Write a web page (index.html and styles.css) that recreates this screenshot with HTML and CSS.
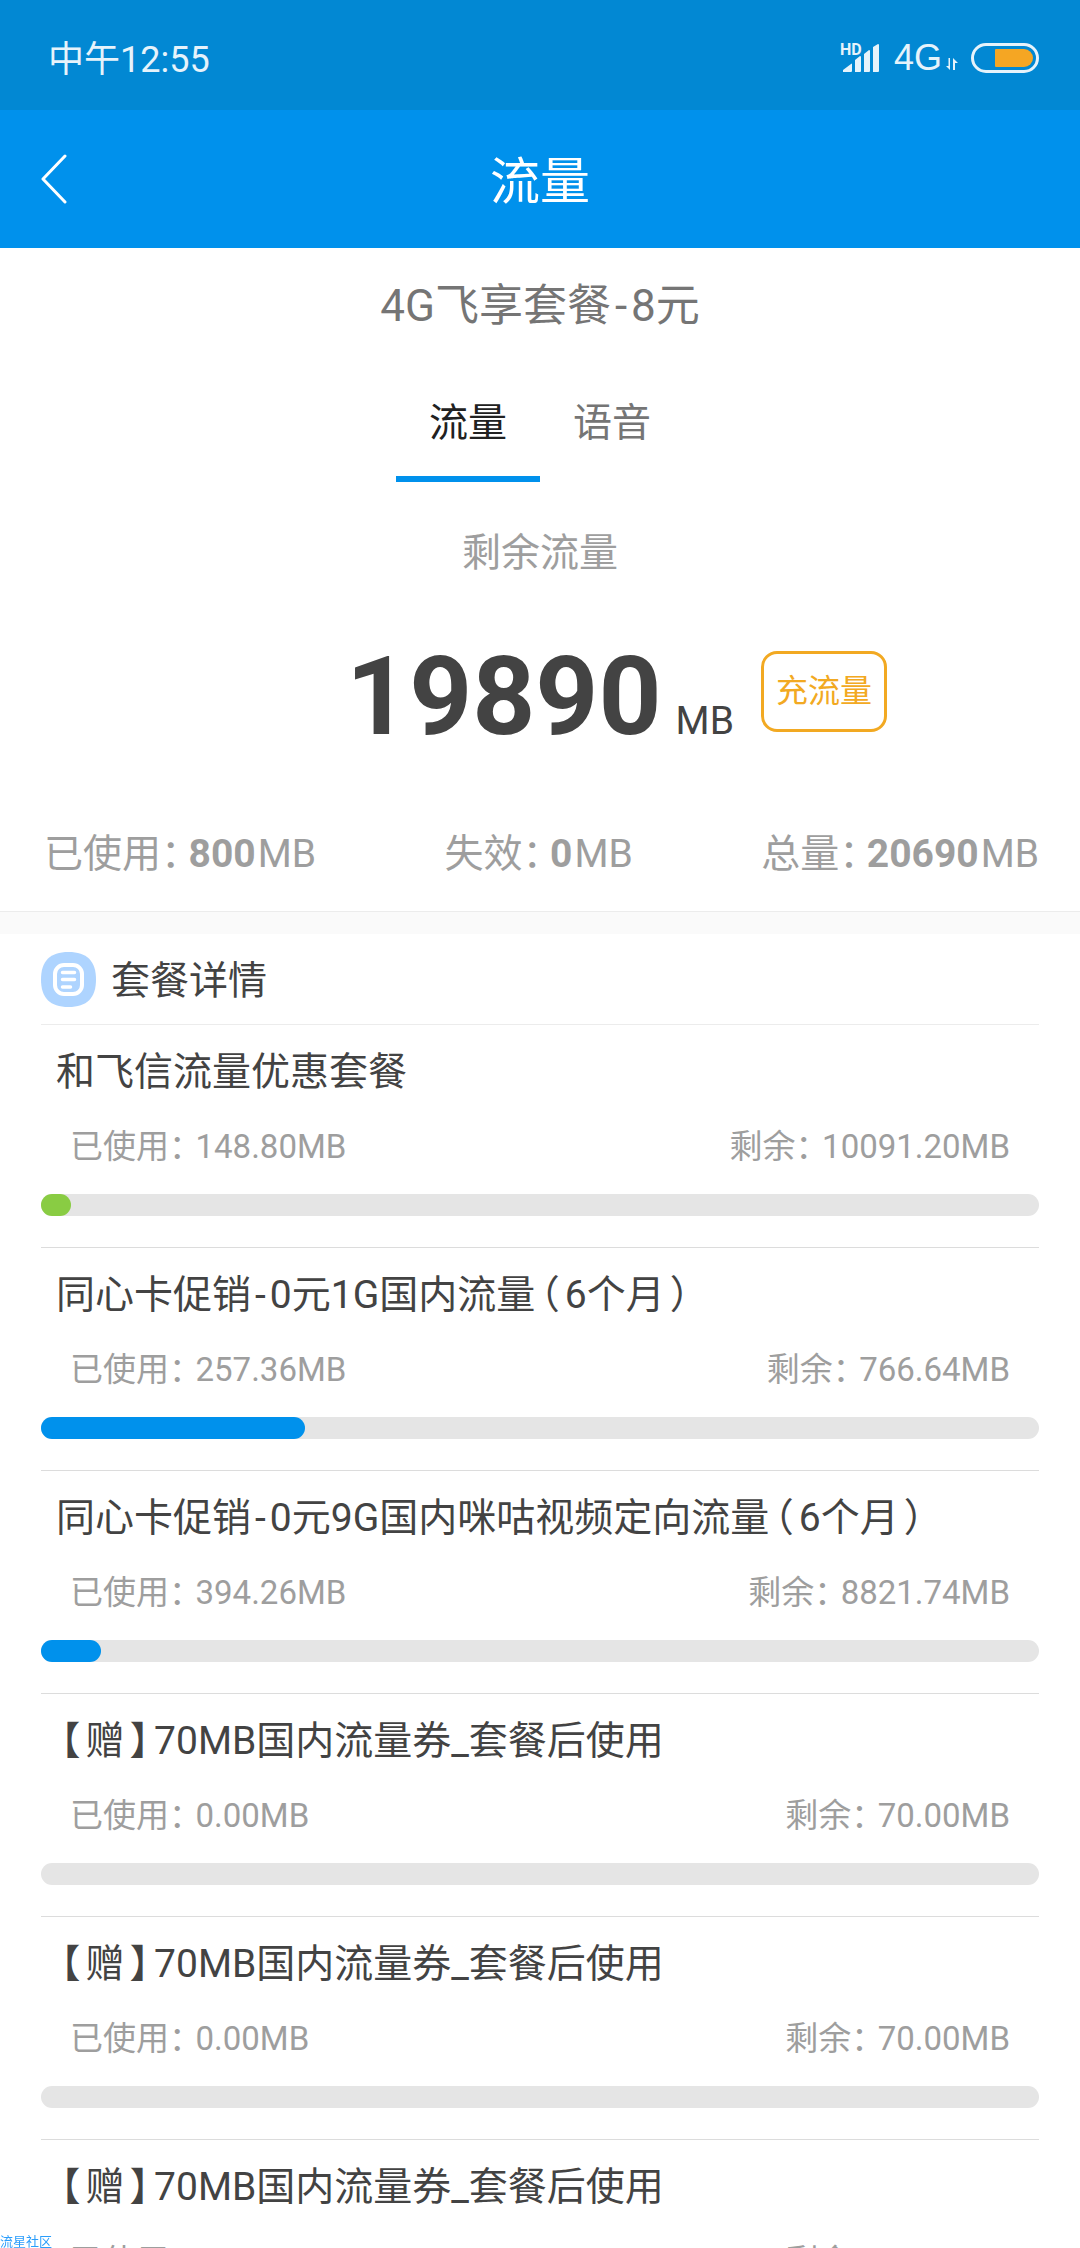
FILE: index.html
```html
<!DOCTYPE html>
<html lang="zh-CN">
<head>
<meta charset="utf-8">
<meta name="viewport" content="width=device-width, initial-scale=1">
<title>流量</title>
<link rel="stylesheet" href="styles.css">
</head>
<body>
<div class="app">
  <div class="status">
    <span class="status-time">中午12:55</span>
    <div class="status-icons">
      <svg class="signal" width="40" height="30" viewBox="0 0 40 30" aria-label="HD">
        <text class="signal-hd" x="0" y="12">HD</text>
        <path d="M3 29v-2l8-6q1-1 1 0v7q0 1-1 1zM15 29V17l5-4q1 0 1 1v14q0 1-1 1zM24 29V11l5-4q1 0 1 1v20q0 1-1 1zM33 29V4l5-3q1 0 1 1v26q0 1-1 1z" fill="currentColor"/>
      </svg>
      <span class="network">4G</span>
      <svg class="arrows" width="12" height="13" viewBox="0 0 12 13" aria-hidden="true">
        <path d="M4 0v12L0 8h2.500V0zM7 12V0l5 5H9v7z" fill="currentColor"/>
      </svg>
      <svg class="battery" width="68" height="30" viewBox="0 0 68 30" aria-label="电量">
        <rect x="1.500" y="1.500" width="65" height="27" rx="13.500" fill="none" stroke="currentColor" stroke-width="3"/>
        <path d="M25 6h28a9 9 0 0 1 0 18H25q-1 0-1-1V7q0-1 1-1z" fill="#f5a623"/>
      </svg>
    </div>
  </div>

  <header class="topbar">
    <button class="back" type="button" aria-label="返回">
      <svg width="26" height="50" viewBox="0 0 26 50" aria-hidden="true">
        <path d="M24 2L2 25l22 23" fill="none" stroke="currentColor" stroke-width="3" stroke-linecap="round" stroke-linejoin="round"/>
      </svg>
    </button>
    <h1 class="topbar-title">流量</h1>
  </header>

  <main class="content">
    <section class="summary">
      <h2 class="plan">4G飞享套餐<span class="dash">-</span>8元</h2>
      <div class="tabs" role="tablist">
        <button class="tab tab-active" type="button" role="tab" aria-selected="true">流量</button>
        <button class="tab" type="button" role="tab" aria-selected="false">语音</button>
      </div>
      <p class="remain-label">剩余流量</p>
      <div class="remain">
        <p class="remain-value"><strong class="remain-number">19890</strong><span class="remain-unit">MB</span></p>
        <button class="recharge" type="button">充流量</button>
      </div>
      <div class="stats">
        <p>已使用<span class="half">：</span><strong class="stat-number">800</strong>MB</p>
        <p>失效<span class="half">：</span><strong class="stat-number">0</strong>MB</p>
        <p>总量<span class="half">：</span><strong class="stat-number">20690</strong>MB</p>
      </div>
    </section>

    <section class="details">
      <div class="details-head">
        <svg width="55" height="55" viewBox="0 0 55 55" aria-hidden="true">
          <path d="M27.500 0C46 0 55 9 55 27.500S46 55 27.500 55 0 46 0 27.500 9 0 27.500 0z" fill="#aed4ff"/>
          <rect x="14" y="13" width="27" height="29" rx="9" fill="none" stroke="#fff" stroke-width="4"/>
          <path d="M21.500 20.500h12M21.500 27.500h12M21.500 35h8" stroke="#fff" stroke-width="3.500" stroke-linecap="round"/>
        </svg>
        <h2 class="details-title">套餐详情</h2>
      </div>
      <ul class="list">
        <li class="item">
          <h3 class="item-title">和飞信流量优惠套餐</h3>
          <div class="item-usage"><span>已使用<span class="half">：</span>148.80MB</span><span>剩余<span class="half">：</span>10091.20MB</span></div>
          <div class="bar"><div class="bar-fill bar-green" style="width:3%"></div></div>
        </li>
        <li class="item">
          <h3 class="item-title">同心卡促销<span class="dash">-</span>0元1G国内流量<span class="bracket">（</span>6个月<span class="bracket">）</span></h3>
          <div class="item-usage"><span>已使用<span class="half">：</span>257.36MB</span><span>剩余<span class="half">：</span>766.64MB</span></div>
          <div class="bar"><div class="bar-fill" style="width:26.5%"></div></div>
        </li>
        <li class="item">
          <h3 class="item-title">同心卡促销<span class="dash">-</span>0元9G国内咪咕视频定向流量<span class="bracket">（</span>6个月<span class="bracket">）</span></h3>
          <div class="item-usage"><span>已使用<span class="half">：</span>394.26MB</span><span>剩余<span class="half">：</span>8821.74MB</span></div>
          <div class="bar"><div class="bar-fill" style="width:6%"></div></div>
        </li>
        <li class="item">
          <h3 class="item-title"><span class="bracket">【</span>赠<span class="bracket">】</span>70MB国内流量券_套餐后使用</h3>
          <div class="item-usage"><span>已使用<span class="half">：</span>0.00MB</span><span>剩余<span class="half">：</span>70.00MB</span></div>
          <div class="bar"></div>
        </li>
        <li class="item">
          <h3 class="item-title"><span class="bracket">【</span>赠<span class="bracket">】</span>70MB国内流量券_套餐后使用</h3>
          <div class="item-usage"><span>已使用<span class="half">：</span>0.00MB</span><span>剩余<span class="half">：</span>70.00MB</span></div>
          <div class="bar"></div>
        </li>
        <li class="item">
          <h3 class="item-title"><span class="bracket">【</span>赠<span class="bracket">】</span>70MB国内流量券_套餐后使用</h3>
          <div class="item-usage"><span>已使用<span class="half">：</span>0.00MB</span><span>剩余<span class="half">：</span>70.00MB</span></div>
          <div class="bar"></div>
        </li>
      </ul>
    </section>
  </main>
  <span class="watermark">流星社区</span>
</div>
</body>
</html>
```

FILE: styles.css
```css
* {
  box-sizing: border-box;
}

body,
h1,
h2,
h3,
p,
ul {
  margin: 0;
  padding: 0;
  font-weight: 400;
}

body {
  background: #fff;
  color: #434343;
  font-family: Roboto, "Noto Sans CJK SC", sans-serif;
  font-size: 39px;
}

button {
  margin: 0;
  padding: 0;
  border: 0;
  background: none;
  color: inherit;
  font: inherit;
  cursor: pointer;
}

svg {
  display: block;
  flex: none;
}

.app {
  display: flex;
  flex-direction: column;
  height: 100vh;
}

/* Status bar */
.status {
  display: flex;
  flex: none;
  align-items: center;
  justify-content: space-between;
  height: 110px;
  padding: 6px 41px 0 48px;
  background: #0288d3;
  color: #e6f3fb;
}

.status-time {
  padding-top: 4px;
  font-size: 36px;
  line-height: 40px;
}

.status-icons {
  display: flex;
  align-items: center;
}

.signal-hd {
  fill: currentColor;
  font-size: 16px;
  font-weight: 700;
}

.network {
  margin-left: 14px;
  font-family: "Liberation Sans", sans-serif;
  font-size: 36px;
  line-height: 36px;
}

.arrows {
  align-self: flex-end;
  margin: 0 13px 5px 4px;
}

/* Title bar */
.topbar {
  display: grid;
  flex: none;
  grid-template-columns: 1fr auto 1fr;
  align-items: center;
  height: 138px;
  padding: 0 41px;
  background: #0091ec;
  color: #fff;
}

.back {
  justify-self: start;
}

.topbar-title {
  padding-top: 6px;
  font-size: 50px;
  line-height: 60px;
}

.content {
  flex: 1;
  min-height: 0;
  overflow-y: auto;
  scrollbar-width: none;
}

/* Summary */
.summary {
  border-bottom: 1px solid #ececec;
  padding: 2px 0 27px;
  text-align: center;
}

.plan {
  color: #757575;
  font-size: 44px;
  line-height: 112px;
}

.tabs {
  display: flex;
  justify-content: center;
  margin-top: 4px;
}

.tab {
  width: 144px;
  padding-top: 4px;
  border-bottom: 6px solid transparent;
  color: #757575;
  line-height: 106px;
}

.tab-active {
  border-color: #0091ec;
  color: #212121;
}

.remain-label {
  margin-top: 41px;
  color: #9e9e9e;
  line-height: 60px;
}

.remain {
  display: grid;
  grid-template-columns: 1fr auto 1fr;
  align-items: start;
  margin-top: 59px;
}

.remain-value {
  display: flex;
  grid-column: 2;
  align-items: baseline;
  gap: 14px;
}

.remain-number {
  font-size: 110px;
  font-weight: 700;
  line-height: 110px;
}

.remain-unit {
  line-height: 50px;
}

.recharge {
  justify-self: start;
  margin: 9px 0 0 27px;
  padding: 0 12px;
  border: 3px solid #f2a922;
  border-radius: 16px;
  color: #f2a922;
  font-size: 32px;
  line-height: 75px;
}

.stats {
  display: flex;
  justify-content: space-between;
  margin-top: 72px;
  padding: 0 41px 0 44px;
  color: #9e9e9e;
  line-height: 60px;
}

.stat-number {
  margin-right: 2px;
  font-weight: 700;
}

/* Half-width punctuation */
.half,
.bracket {
  font-feature-settings: "halt";
}

.half {
  margin-right: 8px;
}

.bracket {
  margin: 0 5px;
}

.dash {
  margin: 0 4px;
}

/* Details */
.details {
  border-top: 22px solid #fafafa;
  padding: 0 41px;
}

.details-head {
  display: flex;
  align-items: center;
  gap: 15px;
  height: 91px;
  border-bottom: 1px solid #ececec;
}

.details-title {
  padding-top: 4px;
  font-size: 39px;
  line-height: 50px;
}

.list {
  list-style: none;
}

.item {
  padding: 22px 0 31px;
  border-bottom: 1px solid #dcdcdc;
}

.item-title {
  padding: 0 15px;
  font-size: 39px;
  line-height: 51px;
}

.item-usage {
  display: flex;
  justify-content: space-between;
  margin: 27px 0 25px;
  padding: 0 29px;
  color: #9e9e9e;
  font-size: 33px;
  line-height: 44px;
}

.item-usage .half {
  margin-right: 10px;
}

.bar {
  height: 22px;
  border-radius: 11px;
  background: #e5e5e5;
}

.bar-fill {
  height: 100%;
  border-radius: 11px;
  background: #0091ec;
}

.bar-green {
  background: #89cc43;
}

.watermark {
  position: fixed;
  bottom: 0;
  left: 0;
  color: #2a9dfb;
  font-size: 13px;
  line-height: 12px;
}
```
